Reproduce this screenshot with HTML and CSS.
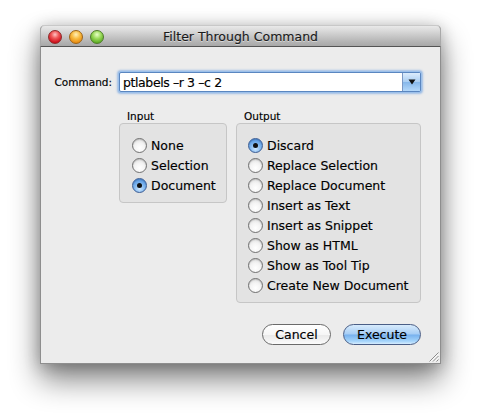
FILE: index.html
```html
<!DOCTYPE html>
<html>
<head>
<meta charset="utf-8">
<title>Filter Through Command</title>
<link rel="stylesheet" href="styles.css">
</head>
<body>
<div class="window">
  <div class="titlebar">
    <div class="lights">
      <span class="light red"></span>
      <span class="light orange"></span>
      <span class="light green"></span>
    </div>
    <div class="title">Filter Through Command</div>
    <div class="spacer"></div>
  </div>
  <div class="content">
    <div class="cmd-row">
      <label class="cmd-label">Command:</label>
      <div class="combo">
        <span class="combo-text">ptlabels –r 3 –c 2</span>
        <span class="combo-btn">
          <svg width="8" height="6" viewBox="0 0 8 6"><path d="M0.5 0.5 H7.5 L4 5.5 Z" fill="#111"/></svg>
        </span>
      </div>
    </div>
    <div class="groups">
      <div class="group group-input">
        <div class="group-label">Input</div>
        <div class="group-box">
          <div class="radio-row"><span class="radio"></span><span>None</span></div>
          <div class="radio-row"><span class="radio"></span><span>Selection</span></div>
          <div class="radio-row"><span class="radio on"></span><span>Document</span></div>
        </div>
      </div>
      <div class="group group-output">
        <div class="group-label">Output</div>
        <div class="group-box">
          <div class="radio-row"><span class="radio on"></span><span>Discard</span></div>
          <div class="radio-row"><span class="radio"></span><span>Replace Selection</span></div>
          <div class="radio-row"><span class="radio"></span><span>Replace Document</span></div>
          <div class="radio-row"><span class="radio"></span><span>Insert as Text</span></div>
          <div class="radio-row"><span class="radio"></span><span>Insert as Snippet</span></div>
          <div class="radio-row"><span class="radio"></span><span>Show as HTML</span></div>
          <div class="radio-row"><span class="radio"></span><span>Show as Tool Tip</span></div>
          <div class="radio-row"><span class="radio"></span><span>Create New Document</span></div>
        </div>
      </div>
    </div>
    <div class="buttons">
      <button class="btn btn-cancel">Cancel</button>
      <button class="btn btn-default">Execute</button>
    </div>
    <div class="grip">
      <svg width="11" height="11" viewBox="0 0 11 11">
        <path d="M10.5 1.5 L1.5 10.5 M10.5 5 L5 10.5 M10.5 8.5 L8.5 10.5" stroke="#8a8a8a" stroke-width="1"/>
        <path d="M10.5 2.8 L2.8 10.5 M10.5 6.3 L6.3 10.5" stroke="#ffffff" stroke-width="0.8"/>
      </svg>
    </div>
  </div>
</div>
</body>
</html>
```
FILE: styles.css
```css
html, body {
  margin: 0;
  padding: 0;
  background: #ffffff;
}

body {
  font-family: "DejaVu Sans", "Liberation Sans", sans-serif;
  color: #000;
  padding: 25px 0 0 40px;
  height: 419px;
  box-sizing: border-box;
  overflow: hidden;
  -webkit-text-stroke: 0.15px #000;
}

.window {
  width: 401px;
  height: 339px;
  box-sizing: border-box;
  background: #ececec;
  border: 1px solid #8e8e8e;
  border-top: none;
  border-radius: 5px 5px 0 0;
  box-shadow: 0 16px 30px rgba(0, 0, 0, 0.48), 0 2px 16px rgba(0, 0, 0, 0.24);
  display: flex;
  flex-direction: column;
}

.titlebar {
  height: 22px;
  box-sizing: border-box;
  margin: 0 -1px;
  border-radius: 5px 5px 0 0;
  border: 1px solid #a9a9a9;
  border-top-color: #c8c8c8;
  border-bottom: 1px solid #545454;
  background: linear-gradient(#e9e9e9 0%, #d2d2d2 35%, #b3b3b3 80%, #a8a8a8 100%);
  display: grid;
  grid-template-columns: 1fr auto 1fr;
  align-items: center;
}

.lights {
  display: flex;
  gap: 7px;
  padding-left: 7px;
  padding-top: 1px;
}

.light {
  width: 14px;
  height: 14px;
  border-radius: 50%;
  box-sizing: border-box;
}

.light.red {
  background: radial-gradient(circle at 50% 30%, #ffc4c4 0%, #f05a5a 35%, #d0101c 75%, #a80010 100%);
  border: 1px solid #8c2a2a;
}

.light.orange {
  background: radial-gradient(circle at 50% 30%, #fff0b8 0%, #f8bc42 40%, #e88a10 80%, #c87000 100%);
  border: 1px solid #9c6418;
}

.light.green {
  background: radial-gradient(circle at 50% 30%, #e8ffc8 0%, #9ada5a 40%, #5aaa22 80%, #3e8a10 100%);
  border: 1px solid #4e7c2a;
}

.title {
  font-size: 12.5px;
  color: #1a1a1a;
  text-shadow: 0 1px 0 rgba(255, 255, 255, 0.5);
  -webkit-text-stroke: 0.15px #1a1a1a;
}

.content {
  flex: 1;
  position: relative;
  padding: 25px 19px 0 0;
  display: flex;
  flex-direction: column;
}

.cmd-row {
  display: flex;
  align-items: center;
  gap: 7px;
}

.cmd-label {
  width: 71px;
  text-align: right;
  font-size: 10.5px;
}

.combo {
  flex: 1;
  height: 20px;
  box-sizing: border-box;
  background: #fff;
  border: 1px solid #5a86c0;
  border-radius: 2px;
  box-shadow: 0 0 0 1px #9cc0ea, 0 0 2px 2px rgba(110, 160, 225, 0.6);
  display: flex;
  align-items: center;
}

.combo-text {
  flex: 1;
  font-size: 12.5px;
  letter-spacing: -0.4px;
  padding-left: 3px;
  white-space: nowrap;
}

.combo-btn {
  width: 17px;
  align-self: stretch;
  border-left: 1px solid #7b98c4;
  background: linear-gradient(#dcecfc 0%, #a9cdf2 50%, #86b7ea 51%, #b4d8fa 100%);
  display: flex;
  align-items: center;
  justify-content: center;
}

.groups {
  display: flex;
  align-items: flex-start;
  gap: 9px;
  margin-top: 17px;
  margin-left: 78px;
}

.group-label {
  font-size: 10.5px;
  line-height: 14px;
  padding-left: 8px;
}

.group-box {
  background: #e3e3e3;
  border: 1px solid #c6c6c6;
  border-radius: 4px;
  padding: 11px 4px 7px 12px;
}

.group-input .group-box {
  width: 108px;
  box-sizing: border-box;
}

.group-output {
  flex: 1;
}

.group-output .group-box {
  padding-left: 11px;
}

.radio-row {
  height: 20px;
  display: flex;
  align-items: center;
  gap: 4px;
  font-size: 12.5px;
  white-space: nowrap;
}

.radio {
  width: 15px;
  height: 15px;
  box-sizing: border-box;
  border-radius: 50%;
  border: 1px solid #707070;
  background: radial-gradient(circle at 50% 70%, #ffffff 0%, #f4f4f4 45%, #d6d6d6 100%);
  box-shadow: inset 0 1px 1px rgba(0, 0, 0, 0.15);
  display: flex;
  align-items: center;
  justify-content: center;
  flex: none;
}

.radio.on {
  border-color: #3a5c94;
  background: radial-gradient(circle at 50% 75%, #cfe8ff 0%, #7fb6ee 45%, #3f86dc 100%);
}

.radio.on::after {
  content: "";
  width: 5px;
  height: 5px;
  border-radius: 50%;
  background: #111;
}

.buttons {
  display: flex;
  justify-content: flex-end;
  gap: 12px;
  margin-top: 21px;
}

.btn {
  height: 21px;
  box-sizing: border-box;
  border-radius: 11px;
  font-family: "DejaVu Sans", "Liberation Sans", sans-serif;
  font-size: 12.5px;
  line-height: 18px;
  padding: 0;
  color: #000;
  -webkit-text-stroke: 0.15px #000;
  border: 1px solid #6a6a6a;
}

.btn-cancel {
  width: 69px;
  background: linear-gradient(#ffffff 0%, #f6f6f6 50%, #e8e8e8 51%, #fbfbfb 100%);
}

.btn-default {
  width: 78px;
  border-color: #4a5e86;
  background: linear-gradient(#d8ebfc 0%, #a6cdf5 48%, #77b1ee 52%, #a4d4fb 85%, #d6ecff 100%);
}

.grip {
  position: absolute;
  right: 1px;
  bottom: 1px;
  width: 11px;
  height: 11px;
  line-height: 0;
}
```
